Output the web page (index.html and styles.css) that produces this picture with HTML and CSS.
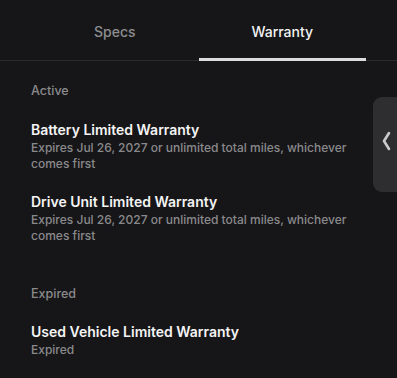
FILE: index.html
```html
<!DOCTYPE html>
<html>
<head>
<meta charset="utf-8">
<link rel="stylesheet" href="styles.css">
</head>
<body>
<div class="page">
  <div class="tabs">
    <div class="tab">Specs</div>
    <div class="tab active">Warranty</div>
  </div>
  <div class="content">
    <div class="section-label">Active</div>
    <div class="item">
      <div class="title">Battery Limited Warranty</div>
      <div class="desc">Expires Jul 26, 2027 or unlimited total miles, whichever comes first</div>
    </div>
    <div class="item">
      <div class="title">Drive Unit Limited Warranty</div>
      <div class="desc">Expires Jul 26, 2027 or unlimited total miles, whichever comes first</div>
    </div>
    <div class="section-label expired">Expired</div>
    <div class="item">
      <div class="title">Used Vehicle Limited Warranty</div>
      <div class="desc">Expired</div>
    </div>
  </div>
  <div class="handle">
    <svg class="chev" width="10" height="20" viewBox="0 0 10 20"><path d="M8 2 L3 10 L8 18" fill="none" stroke="#cacaca" stroke-width="2.6" stroke-linecap="round" stroke-linejoin="round"/></svg>
  </div>
</div>
</body>
</html>
```
FILE: styles.css
```css
html, body {
  margin: 0;
  padding: 0;
  background: #161618;
}
body {
  font-family: Inter, "Noto Sans", sans-serif;
  color: #fff;
}
.page {
  position: relative;
  width: 397px;
  height: 378px;
  overflow: hidden;
  background: #161618;
}
.tabs {
  display: flex;
  padding: 0 31px;
  border-bottom: 1px solid #2a2a2c;
  height: 60px;
}
.tab {
  flex: 1;
  display: flex;
  align-items: center;
  justify-content: center;
  font-size: 14px;
  font-weight: 500;
  color: #8e8e90;
  padding-top: 4px;
  box-sizing: border-box;
  border-bottom: 3px solid transparent;
  margin-bottom: -1px;
}
.tab.active {
  color: #f2f2f2;
  border-bottom-color: #dcdcdc;
}
.content {
  padding: 22px 31px 0;
}
.section-label {
  font-size: 12.5px;
  font-weight: 500;
  color: #8a8a8c;
  line-height: 16px;
  margin-bottom: 21px;
}
.section-label.expired {
  margin-top: 42px;
  margin-bottom: 20px;
}
.item {
  margin-bottom: 20px;
}
.title {
  font-size: 14px;
  font-weight: 600;
  color: #f4f4f4;
  line-height: 20px;
}
.desc {
  font-size: 12px;
  font-weight: 500;
  color: #8a8a8c;
  line-height: 16px;
  width: 330px;
}
.handle {
  position: absolute;
  left: 373px;
  top: 97px;
  width: 40px;
  height: 95px;
  background: #2e2e30;
  border-radius: 9px;
  display: flex;
  align-items: center;
  padding-left: 8px;
  padding-bottom: 8px;
  box-sizing: border-box;
}
```
